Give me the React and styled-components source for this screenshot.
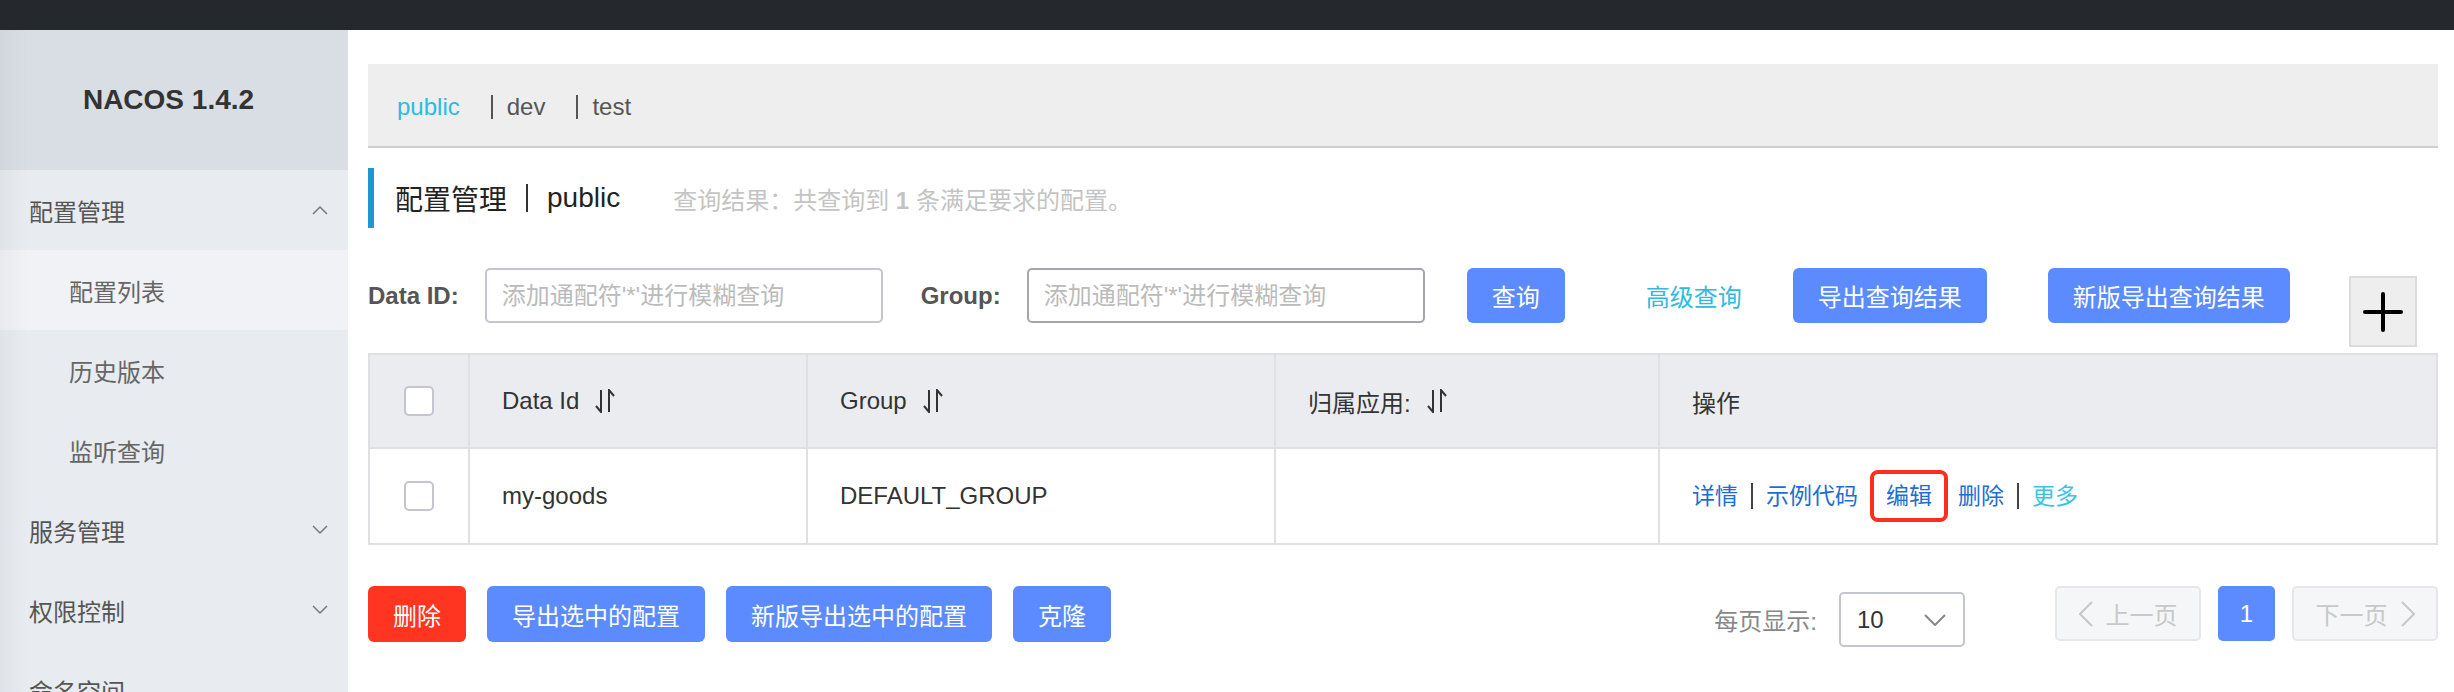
import React from "react";
import styled, { createGlobalStyle } from "styled-components";

const GlobalStyle = createGlobalStyle`
  html, body {
    margin: 0;
    padding: 0;
  }
  body {
    font-family: "Liberation Sans", "Noto Sans CJK SC", sans-serif;
    color: #333;
    background: #fff;
  }
  * {
    box-sizing: border-box;
  }
`;

const Page = styled.div`
  width: 2454px;
  height: 692px;
  overflow: hidden;
  display: flex;
  flex-direction: column;
`;

const TopBar = styled.div`
  height: 30px;
  flex: none;
  background: #25292e;
`;

const Body = styled.div`
  flex: 1;
  display: flex;
  min-height: 0;
`;

// sidebar
const Sidebar = styled.aside`
  width: 348px;
  flex: none;
  display: flex;
  flex-direction: column;
  background: #e8ebef;
`;

const edgeShade = "linear-gradient(to right, rgba(0, 0, 0, 0.035), rgba(0, 0, 0, 0) 28px)";

const Logo = styled.div`
  height: 140px;
  flex: none;
  display: flex;
  align-items: center;
  justify-content: center;
  padding-right: 11px;
  font-size: 28px;
  font-weight: bold;
  color: #333;
  background: ${edgeShade}, #d9dee4;
`;

const MenuItem = styled.div`
  height: 80px;
  flex: none;
  display: flex;
  align-items: center;
  justify-content: space-between;
  padding: 0 20px 0 ${(p) => (p.$sub ? 69 : 29)}px;
  font-size: 24px;
  color: ${(p) => (p.$sub ? "#666" : "#555")};
  background: ${edgeShade}, ${(p) => (p.$active ? "#f1f2f5" : "#e8ebef")};
`;

// main area
const Main = styled.main`
  flex: 1;
  min-width: 0;
  padding: 34px 16px 0 20px;
`;

const TabBar = styled.div`
  height: 84px;
  display: flex;
  align-items: center;
  padding: 4px 0 0 29px;
  background: #eeeeee;
  border-bottom: 2px solid #cfcfcf;
  font-size: 24px;
`;

const Tab = styled.span`
  display: inline-flex;
  align-items: center;
  margin-right: 31px;
  color: ${(p) => (p.$active ? "#2fbbdf" : "#555")};
`;

const TabSep = styled.i`
  width: 2px;
  height: 24px;
  margin-right: 14px;
  background: #555;
`;

const TitleRow = styled.div`
  margin-top: 20px;
  height: 60px;
  display: flex;
  align-items: center;
  padding-left: 21px;
  border-left: 6px solid #1f95d3;
`;

const Title = styled.h1`
  margin: 0;
  display: flex;
  align-items: center;
  font-size: 28px;
  font-weight: normal;
  color: #222;
`;

const TitleSep = styled.i`
  width: 2px;
  height: 28px;
  margin: 0 19px;
  background: #333;
`;

const Summary = styled.span`
  margin-left: 53px;
  font-size: 24px;
  color: #c4c4c4;

  strong {
    font-weight: bold;
  }
`;

const SearchRow = styled.div`
  margin-top: 40px;
  display: flex;
  align-items: flex-start;
`;

const Label = styled.label`
  height: 55px;
  display: flex;
  align-items: center;
  margin: 0 26px 0 ${(p) => p.$ml || 0}px;
  font-size: 24px;
  font-weight: bold;
  color: #555;
`;

const Input = styled.input`
  width: 398px;
  height: 55px;
  flex: none;
  padding: 0 15px;
  border: 2px solid ${(p) => (p.$hover ? "#a3a6ad" : "#c4c6cf")};
  border-radius: 5px;
  font-family: inherit;
  font-size: 24px;
  outline: none;

  &::placeholder {
    color: #bbb;
  }
`;

const Button = styled.button`
  height: ${(p) => p.$h || 55}px;
  flex: none;
  margin-left: ${(p) => p.$ml || 0}px;
  padding: 0 25px;
  border: none;
  border-radius: 6px;
  background: ${(p) => (p.$danger ? "#ff3521" : "#5b8bff")};
  color: #fff;
  font-family: inherit;
  font-size: 24px;
`;

const TextLink = styled.a`
  height: 55px;
  display: flex;
  align-items: center;
  margin-left: 81px;
  font-size: 24px;
  color: #2fbbdf;
`;

const PlusButton = styled.button`
  width: 68px;
  height: 71px;
  flex: none;
  margin: 8px 0 0 59px;
  padding: 0;
  display: flex;
  align-items: center;
  justify-content: center;
  background: #eeeeee;
  border: 2px solid #dcdcdc;
`;

// table
const Table = styled.div`
  margin-top: 6px;
  display: grid;
  grid-template-columns: 100px 338px 468px 384px 1fr;
  border: 2px solid #dfe0e4;
`;

const Cell = styled.div`
  height: 94px;
  display: flex;
  align-items: center;
  justify-content: ${(p) => (p.$center ? "center" : "flex-start")};
  padding: ${(p) => (p.$center ? "0" : "0 32px")};
  font-size: 24px;
  color: #333;
  background: ${(p) => (p.$head ? "#ebecf0" : "#fff")};
  border-bottom: ${(p) => (p.$head ? "2px solid #dfe0e4" : "none")};
  border-right: ${(p) => (p.$last ? "none" : "2px solid #dfe0e4")};
`;

const Checkbox = styled.span`
  width: 30px;
  height: 30px;
  border: 2px solid #c4c6cf;
  border-radius: 5px;
  background: #fff;
`;

const SortIcon = styled.svg`
  margin-left: 16px;
  flex: none;
`;

const Actions = styled.div`
  display: flex;
  align-items: center;
  font-size: 23px;
  line-height: 26px;
`;

const ActionLink = styled.a`
  color: ${(p) => (p.$more ? "#3cc3e3" : "#1e6ed2")};
`;

const ActionSep = styled.i`
  width: 2px;
  height: 26px;
  margin: 0 13px;
  background: #444;
`;

const Highlight = styled.span`
  margin: 0 10px 0 12px;
  padding: 9px 12px;
  border: 4px solid #ff2d1f;
  border-radius: 8px;
  color: #1e6ed2;
`;

// footer
const Footer = styled.div`
  margin-top: 41px;
  display: flex;
  justify-content: space-between;
  align-items: flex-start;
`;

const ButtonGroup = styled.div`
  display: flex;
  gap: 21px;
`;

const RightGroup = styled.div`
  display: flex;
  align-items: flex-start;
`;

const PageSize = styled.div`
  display: flex;
  align-items: center;
  margin: 6px 90px 0 0;
  font-size: 24px;
  color: #888;
`;

const Select = styled.div`
  width: 126px;
  height: 55px;
  margin-left: 22px;
  display: flex;
  align-items: center;
  justify-content: space-between;
  padding: 0 17px 0 16px;
  border: 2px solid #c4c6cf;
  border-radius: 5px;
  font-size: 24px;
  color: #333;
`;

const Pager = styled.div`
  display: flex;
  gap: 17px;
`;

const PageButton = styled.button`
  width: ${(p) => p.$w}px;
  height: 55px;
  display: flex;
  align-items: center;
  justify-content: center;
  gap: 13px;
  padding: 0;
  border: ${(p) => (p.$current ? "none" : "2px solid #e6e7eb")};
  border-radius: 5px;
  background: ${(p) => (p.$current ? "#5b8bff" : "#f5f6f8")};
  color: ${(p) => (p.$current ? "#fff" : "#c8c8c8")};
  font-family: inherit;
  font-size: 24px;
`;

const Chevron = ({ up }) => (
  <svg width="16" height="10" viewBox="0 0 16 10">
    <polyline
      points={up ? "1,9 8,2 15,9" : "1,1 8,8 15,1"}
      fill="none"
      stroke="#777"
      strokeWidth="1.5"
    />
  </svg>
);

const Sort = () => (
  <SortIcon width="20" height="24" viewBox="0 0 20 24">
    <g fill="none" stroke="#333" strokeWidth="2">
      <path d="M6 1 V23 L1 17" />
      <path d="M14 23 V1 L19 7" />
    </g>
  </SortIcon>
);

const columns = [
  { label: "Data Id", sort: true },
  { label: "Group", sort: true },
  { label: "归属应用:", sort: true },
  { label: "操作", sort: false },
];

const App = () => {
  return (
    <>
      <GlobalStyle />
      <Page>
        <TopBar />
        <Body>
          <Sidebar>
            <Logo>NACOS 1.4.2</Logo>
            <MenuItem>
              配置管理
              <Chevron up />
            </MenuItem>
            <MenuItem $sub $active>配置列表</MenuItem>
            <MenuItem $sub>历史版本</MenuItem>
            <MenuItem $sub>监听查询</MenuItem>
            <MenuItem>
              服务管理
              <Chevron />
            </MenuItem>
            <MenuItem>
              权限控制
              <Chevron />
            </MenuItem>
            <MenuItem>命名空间</MenuItem>
          </Sidebar>

          <Main>
            <TabBar>
              <Tab $active>public</Tab>
              <Tab>
                <TabSep />
                dev
              </Tab>
              <Tab>
                <TabSep />
                test
              </Tab>
            </TabBar>

            <TitleRow>
              <Title>
                配置管理
                <TitleSep />
                public
              </Title>
              <Summary>
                查询结果：共查询到 <strong>1</strong> 条满足要求的配置。
              </Summary>
            </TitleRow>

            <SearchRow>
              <Label>Data ID:</Label>
              <Input placeholder="添加通配符'*'进行模糊查询" />
              <Label $ml={38}>Group:</Label>
              <Input $hover placeholder="添加通配符'*'进行模糊查询" />
              <Button $ml={42}>查询</Button>
              <TextLink>高级查询</TextLink>
              <Button $ml={51}>导出查询结果</Button>
              <Button $ml={61}>新版导出查询结果</Button>
              <PlusButton>
                <svg width="40" height="40" viewBox="0 0 40 40">
                  <g stroke="#000" strokeWidth="4" strokeLinecap="round">
                    <line x1="20" y1="2" x2="20" y2="38" />
                    <line x1="2" y1="20" x2="38" y2="20" />
                  </g>
                </svg>
              </PlusButton>
            </SearchRow>

            <Table>
              <Cell $head $center>
                <Checkbox />
              </Cell>
              {columns.map((col, i) => (
                <Cell $head key={col.label} $last={i === columns.length - 1}>
                  {col.label}
                  {col.sort ? <Sort /> : null}
                </Cell>
              ))}

              <Cell $center>
                <Checkbox />
              </Cell>
              <Cell>my-goods</Cell>
              <Cell>DEFAULT_GROUP</Cell>
              <Cell />
              <Cell $last>
                <Actions>
                  <ActionLink>详情</ActionLink>
                  <ActionSep />
                  <ActionLink>示例代码</ActionLink>
                  <Highlight>编辑</Highlight>
                  <ActionLink>删除</ActionLink>
                  <ActionSep />
                  <ActionLink $more>更多</ActionLink>
                </Actions>
              </Cell>
            </Table>

            <Footer>
              <ButtonGroup>
                <Button $h={56} $danger>
                  删除
                </Button>
                <Button $h={56}>导出选中的配置</Button>
                <Button $h={56}>新版导出选中的配置</Button>
                <Button $h={56}>克隆</Button>
              </ButtonGroup>

              <RightGroup>
                <PageSize>
                  每页显示:
                  <Select>
                    10
                    <svg width="22" height="12" viewBox="0 0 22 12">
                      <polyline
                        points="1,1 11,11 21,1"
                        fill="none"
                        stroke="#888"
                        strokeWidth="2"
                      />
                    </svg>
                  </Select>
                </PageSize>
                <Pager>
                  <PageButton $w={146}>
                    <svg width="14" height="26" viewBox="0 0 14 26">
                      <polyline points="13,1 1,13 13,25" fill="none" stroke="#c8c8c8" strokeWidth="2" />
                    </svg>
                    上一页
                  </PageButton>
                  <PageButton $w={57} $current>
                    1
                  </PageButton>
                  <PageButton $w={146}>
                    下一页
                    <svg width="14" height="26" viewBox="0 0 14 26">
                      <polyline points="1,1 13,13 1,25" fill="none" stroke="#c8c8c8" strokeWidth="2" />
                    </svg>
                  </PageButton>
                </Pager>
              </RightGroup>
            </Footer>
          </Main>
        </Body>
      </Page>
    </>
  );
};

export default App;
